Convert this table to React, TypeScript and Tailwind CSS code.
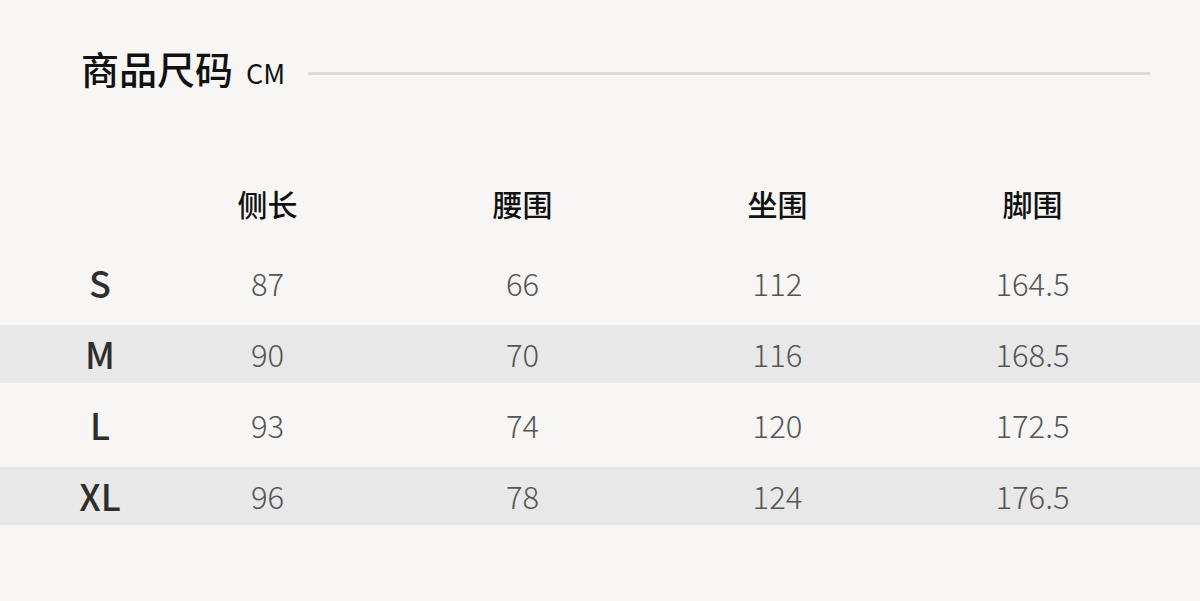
const rows = [
  { size: "S", values: ["87", "66", "112", "164.5"], band: false },
  { size: "M", values: ["90", "70", "116", "168.5"], band: true },
  { size: "L", values: ["93", "74", "120", "172.5"], band: false },
  { size: "XL", values: ["96", "78", "124", "176.5"], band: true },
];

const headers = ["侧长", "腰围", "坐围", "脚围"];

const font = "font-['Noto_Sans_CJK_SC','Noto_Sans',sans-serif]";

export default function App() {
  return (
    <div className={`w-[1200px] h-[601px] bg-[#f7f6f4] overflow-hidden ${font}`}>
      {/* Title */}
      <div className="flex items-center pt-[44px] pl-[81px] pr-[50px]">
        <div className="flex items-baseline shrink-0">
          <span className="text-[38px] leading-[48px] font-medium text-[#111]">
            商品尺码
          </span>
          <span className="ml-[13px] text-[27px] leading-[48px] text-[#111]">
            CM
          </span>
        </div>
        <div className="flex-1 ml-[23px] h-[3px] bg-[#dcdcdc] mt-[6px]" />
      </div>

      {/* Header row */}
      <div className="grid grid-cols-[140px_255px_255px_255px_255px] h-[58px] items-center mt-[77px]">
        <div />
        {headers.map((h) => (
          <div key={h} className="text-center text-[30px] font-medium text-[#111]">
            {h}
          </div>
        ))}
      </div>

      {/* Rows */}
      <div className="flex flex-col gap-[13px] mt-[22px]">
        {rows.map((r) => (
          <div
            key={r.size}
            className={`grid grid-cols-[60px_80px_255px_255px_255px_255px] h-[58px] items-center ${
              r.band ? "bg-[#e9e8e8]" : ""
            }`}
          >
            <div />
            <div className="text-center text-[36px] font-medium text-[#2e2e2e] pb-[3px]">
              {r.size}
            </div>
            {r.values.map((v, i) => (
              <div key={i} className="text-center text-[31px] font-light text-[#555]">
                {v}
              </div>
            ))}
          </div>
        ))}
      </div>
    </div>
  );
}
